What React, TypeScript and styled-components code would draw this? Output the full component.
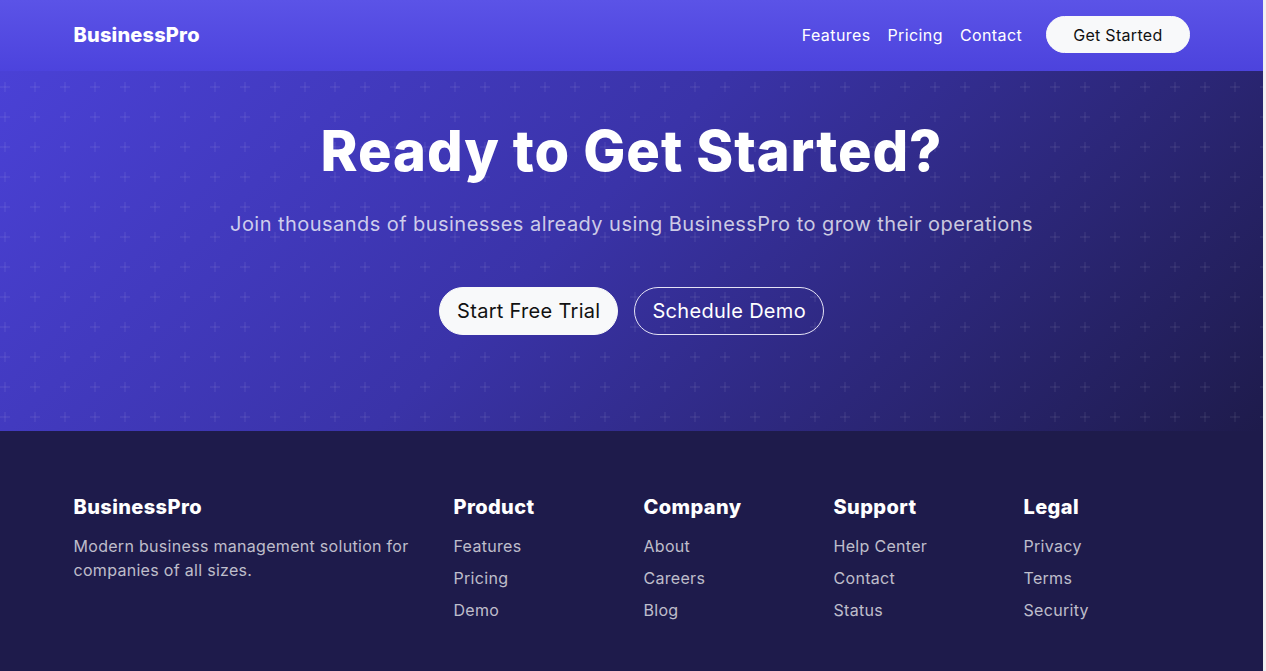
import styled, { createGlobalStyle } from "styled-components";

const GlobalStyle = createGlobalStyle`
	* {
		box-sizing: border-box;
	}
	html,
	body {
		margin: 0;
		padding: 0;
		background: #f1f1f1;
	}
	body {
		font-family: "Inter", "Noto Sans", sans-serif;
		color: #fff;
		-webkit-font-smoothing: antialiased;
	}
`;

const plusPattern = `url("data:image/svg+xml,%3Csvg xmlns='http://www.w3.org/2000/svg' width='30' height='30'%3E%3Cg fill='%23ffffff' fill-opacity='0.065'%3E%3Crect x='10' y='14.25' width='10' height='1.5'/%3E%3Crect x='14.25' y='10' width='1.5' height='10'/%3E%3C/g%3E%3C/svg%3E")`;

const Page = styled.div`
	width: 1263px;
	min-height: 671px;
	background: #1e1b4b;
`;

const Container = styled.div`
	width: 1140px;
	margin: 0 auto;
	padding: 0 12px;
`;

const Header = styled.header`
	height: 71px;
	background: linear-gradient(180deg, #5b53e7 0%, #4c43dd 100%);
`;

const HeaderInner = styled(Container)`
	height: 100%;
	padding-bottom: 2px;
	display: flex;
	align-items: center;
	justify-content: space-between;
`;

const Logo = styled.a`
	font-size: 20px;
	font-weight: 800;
	letter-spacing: 0.2px;
	color: #fff;
	text-decoration: none;
`;

const Nav = styled.nav`
	display: flex;
	align-items: center;
	gap: 17px;
`;

const NavLink = styled.a`
	font-size: 16px;
	letter-spacing: 0.4px;
	color: #fff;
	text-decoration: none;
`;

const Pill = styled.a<{ $outline?: boolean; $large?: boolean }>`
	display: inline-flex;
	align-items: center;
	justify-content: center;
	height: ${(p) => (p.$large ? "48px" : "37px")};
	padding: 0 ${(p) => (p.$large ? "17px" : "26px")};
	border-radius: 999px;
	font-size: ${(p) => (p.$large ? "20px" : "16px")};
	letter-spacing: 0.3px;
	text-decoration: none;
	color: ${(p) => (p.$outline ? "#fff" : "#111")};
	background: ${(p) => (p.$outline ? "transparent" : "#f8f9fa")};
	border: 1px solid ${(p) => (p.$outline ? "#e4e2f5" : "#f8f9fa")};
`;

const HeaderButton = styled(Pill)`
	margin-left: 7px;
`;

const Hero = styled.section`
	height: 360px;
	background-color: #34309a;
	background-image: ${plusPattern},
		linear-gradient(135deg, #4a41d6 0%, #3a33a8 45%, #1e1b4b 100%);
	background-position: -10px 1px, 0 0;
	background-repeat: repeat, no-repeat;
	background-size: 30px 30px, 100% 100%;
	padding-top: 47px;
	text-align: center;
`;

const Title = styled.h1`
	margin: 0 0 24px;
	font-size: 56px;
	line-height: 67px;
	font-weight: 800;
	letter-spacing: 0.9px;
`;

const Lead = styled.p`
	margin: 0 0 48px;
	font-size: 20px;
	line-height: 30px;
	letter-spacing: 0.45px;
	color: rgba(255, 255, 255, 0.75);
`;

const Actions = styled.div`
	display: flex;
	justify-content: center;
	gap: 16px;
`;

const Footer = styled.footer`
	padding: 64px 0 64px;
	background: #1e1b4b;
`;

const FooterGrid = styled.div`
	display: grid;
	grid-template-columns: 380px repeat(4, 190px);
	margin: 0 -12px;
`;

const FooterCol = styled.div`
	padding: 0 12px;
`;

const FooterTitle = styled.h5`
	margin: 0 0 15px;
	font-size: 20px;
	line-height: 24px;
	font-weight: 800;
	letter-spacing: 0.4px;
	color: #fff;
`;

const FooterText = styled.p`
	margin: 0;
	font-size: 16px;
	line-height: 24px;
	letter-spacing: 0.3px;
	color: rgba(255, 255, 255, 0.72);
	max-width: 356px;
`;

const LinkList = styled.ul`
	list-style: none;
	margin: 0;
	padding: 0;
	display: flex;
	flex-direction: column;
	gap: 8px;
`;

const FooterLink = styled.a`
	display: block;
	font-size: 16px;
	line-height: 24px;
	letter-spacing: 0.3px;
	color: rgba(255, 255, 255, 0.72);
	text-decoration: none;
`;

const columns = [
	{ title: "Product", links: ["Features", "Pricing", "Demo"] },
	{ title: "Company", links: ["About", "Careers", "Blog"] },
	{ title: "Support", links: ["Help Center", "Contact", "Status"] },
	{ title: "Legal", links: ["Privacy", "Terms", "Security"] },
];

function App() {
	return (
		<>
			<GlobalStyle />
			<Page>
				<Header>
					<HeaderInner>
						<Logo href="#">BusinessPro</Logo>
						<Nav>
							<NavLink href="#">Features</NavLink>
							<NavLink href="#">Pricing</NavLink>
							<NavLink href="#">Contact</NavLink>
							<HeaderButton href="#">Get Started</HeaderButton>
						</Nav>
					</HeaderInner>
				</Header>

				<Hero>
					<Container>
						<Title>Ready to Get Started?</Title>
						<Lead>
							Join thousands of businesses already using BusinessPro to grow
							their operations
						</Lead>
						<Actions>
							<Pill href="#" $large>
								Start Free Trial
							</Pill>
							<Pill href="#" $large $outline>
								Schedule Demo
							</Pill>
						</Actions>
					</Container>
				</Hero>

				<Footer>
					<Container>
						<FooterGrid>
							<FooterCol>
								<FooterTitle>BusinessPro</FooterTitle>
								<FooterText>
									Modern business management solution for companies of all
									sizes.
								</FooterText>
							</FooterCol>
							{columns.map((col) => (
								<FooterCol key={col.title}>
									<FooterTitle>{col.title}</FooterTitle>
									<LinkList>
										{col.links.map((link) => (
											<li key={link}>
												<FooterLink href="#">{link}</FooterLink>
											</li>
										))}
									</LinkList>
								</FooterCol>
							))}
						</FooterGrid>
					</Container>
				</Footer>
			</Page>
		</>
	);
}

export default App;
